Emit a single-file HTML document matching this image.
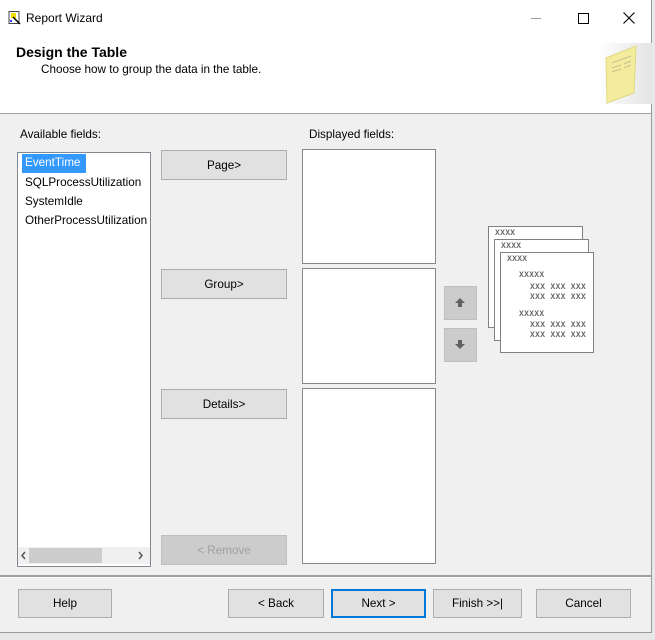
<!DOCTYPE html>
<html><head><meta charset="utf-8"><style>
*{margin:0;padding:0;box-sizing:border-box}
body{width:655px;height:640px;background:#e8e8e8;font-family:"Liberation Sans",sans-serif;font-size:11.7px;color:#000;position:relative;overflow:hidden}
.win{position:absolute;left:0;top:0;width:652px;height:633px;background:#f0f0f0;border-right:1px solid #9a9a9a;border-bottom:1px solid #9a9a9a}
.a{position:absolute}
.btn{position:absolute;background:#e1e1e1;border:1px solid #adadad;text-align:center;font-size:11.7px;display:flex;align-items:center;justify-content:center}
.box{position:absolute;background:#fff;border:1px solid #828790}
.pg{position:absolute;background:#fff;border:1px solid #808080}
.x{position:absolute;font-size:8px;color:#666;letter-spacing:0.3px;font-family:"Liberation Mono",monospace;font-weight:bold}
</style></head><body>
<div class="win">
<div class="a" style="left:0;top:0;width:651px;height:113px;background:#fff"></div>
<svg class="a" style="left:8px;top:11px" width="14" height="14"><rect x="1" y="0.5" width="10" height="12" fill="#fff" stroke="#444"/><rect x="3" y="2" width="5" height="5" fill="#f0e000"/><path d="M5 6 L12 13" stroke="#000" stroke-width="1.5"/><rect x="2" y="9" width="2" height="2" fill="#33f"/></svg>
<div class="a" style="left:26px;top:11px;font-size:12px">Report Wizard</div>
<div class="a" style="left:531px;top:18px;width:10px;height:1px;background:#999"></div>
<div class="a" style="left:578px;top:13px;width:11px;height:11px;border:1px solid #000"></div>
<svg class="a" style="left:623px;top:12px" width="12" height="12"><path d="M0.5 0.5L11.5 11.5M11.5 0.5L0.5 11.5" stroke="#000" stroke-width="1.1"/></svg>
<div class="a" style="left:16px;top:44px;font-size:14px;font-weight:bold">Design the Table</div>
<div class="a" style="left:41px;top:63px;font-size:11.7px">Choose how to group the data in the table.</div>
<div class="a" style="left:597px;top:43px;width:55px;height:61px;background:linear-gradient(90deg,#fff,#e4e4e4)"></div>
<svg class="a" style="left:603px;top:43px" width="36" height="62"><path d="M3 15 L33 3 L31 50 L4 60 Z" fill="#f3ec9c" stroke="#e0d880"/><path d="M9 20L28 13M9 25L18 22M21 21L28 18M9 29L18 26M21 25L28 22" stroke="#c8c090"/></svg>
<div class="a" style="left:0;top:113px;width:651px;height:1px;background:#a0a0a0"></div>
<div class="a" style="left:20px;top:128px">Available fields:</div>
<div class="box" style="left:17px;top:152px;width:134px;height:415px"></div>
<div class="a" style="left:22px;top:154px;width:64px;height:19px;background:#3399ff"></div>
<div class="a" style="left:25px;top:156px;color:#fff">EventTime</div>
<div class="a" style="left:25px;top:176px">SQLProcessUtilization</div>
<div class="a" style="left:25px;top:195px">SystemIdle</div>
<div class="a" style="left:25px;top:214px">OtherProcessUtilization</div>
<div class="a" style="left:18px;top:547px;width:132px;height:17px;background:#f0f0f0"></div>
<div class="a" style="left:29px;top:548px;width:73px;height:15px;background:#cdcdcd"></div>
<svg class="a" style="left:20px;top:551px" width="8" height="9"><path d="M5 1L2 4.5L5 8" stroke="#555" stroke-width="1.5" fill="none"/></svg>
<svg class="a" style="left:136px;top:551px" width="8" height="9"><path d="M3 1L6 4.5L3 8" stroke="#555" stroke-width="1.5" fill="none"/></svg>
<div class="btn" style="left:161px;top:150px;width:126px;height:30px">Page&gt;</div>
<div class="btn" style="left:161px;top:269px;width:126px;height:30px">Group&gt;</div>
<div class="btn" style="left:161px;top:389px;width:126px;height:30px">Details&gt;</div>
<div class="btn" style="left:161px;top:535px;width:126px;height:30px;background:#cccccc;border-color:#bfbfbf;color:#a0a0a0">&lt; Remove</div>
<div class="a" style="left:309px;top:128px">Displayed fields:</div>
<div class="box" style="left:302px;top:149px;width:134px;height:115px"></div>
<div class="box" style="left:302px;top:268px;width:134px;height:116px"></div>
<div class="box" style="left:302px;top:388px;width:134px;height:176px"></div>
<div class="a" style="left:444px;top:286px;width:33px;height:34px;background:#cccccc;border:1px solid #bfbfbf"></div>
<div class="a" style="left:444px;top:328px;width:33px;height:34px;background:#cccccc;border:1px solid #bfbfbf"></div>
<svg class="a" style="left:454px;top:297px" width="12" height="12"><path d="M6 1L11 6H8V10H4V6H1Z" fill="#606060"/></svg>
<svg class="a" style="left:454px;top:339px" width="12" height="12"><path d="M6 10L11 5H8V1H4V5H1Z" fill="#606060"/></svg>
<div class="pg" style="left:488px;top:226px;width:95px;height:102px"></div>
<div class="x" style="left:495px;top:229px">XXXX</div>
<div class="pg" style="left:494px;top:239px;width:95px;height:102px"></div>
<div class="x" style="left:501px;top:242px">XXXX</div>
<div class="pg" style="left:500px;top:252px;width:94px;height:101px"></div>
<div class="x" style="left:507px;top:255px">XXXX</div>
<div class="x" style="left:519px;top:271px">XXXXX</div>
<div class="x" style="left:530px;top:283px">XXX XXX XXX</div>
<div class="x" style="left:530px;top:293px">XXX XXX XXX</div>
<div class="x" style="left:519px;top:310px">XXXXX</div>
<div class="x" style="left:530px;top:321px">XXX XXX XXX</div>
<div class="x" style="left:530px;top:331px">XXX XXX XXX</div>
<div class="a" style="left:0;top:575px;width:651px;height:2px;background:#a0a0a0"></div>
<div class="a" style="left:0;top:577px;width:651px;height:1px;background:#fff"></div>
<div class="btn" style="left:18px;top:589px;width:94px;height:29px">Help</div>
<div class="btn" style="left:228px;top:589px;width:96px;height:29px">&lt; Back</div>
<div class="btn" style="left:331px;top:589px;width:95px;height:29px;border:2px solid #0078d7">Next &gt;</div>
<div class="btn" style="left:433px;top:589px;width:89px;height:29px">Finish &gt;&gt;|</div>
<div class="btn" style="left:536px;top:589px;width:95px;height:29px">Cancel</div>
</div>
</body></html>
